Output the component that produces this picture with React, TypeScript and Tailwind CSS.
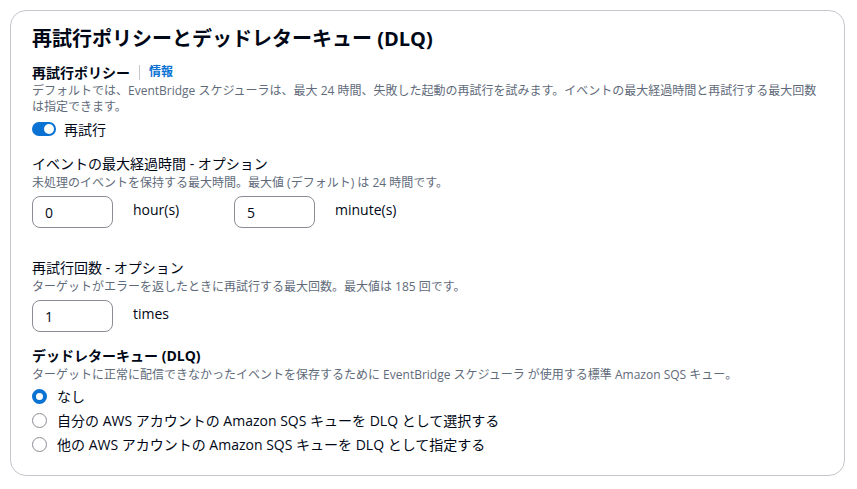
const font = { fontFamily: '"Open Sans", "Noto Sans CJK JP", sans-serif' };

function NumberInput({ value }: { value: string }) {
  return (
    <input
      type="text"
      defaultValue={value}
      className="w-[81px] h-[32px] rounded-lg border border-[#8c8c94] bg-white pl-[12px] text-[14px] text-[#000716] focus:outline-none"
    />
  );
}

function Radio({ checked, label }: { checked?: boolean; label: string }) {
  return (
    <label className="flex items-center gap-[10px] h-[24px] text-[14px] text-[#000716]">
      {checked ? (
        <span className="w-[15px] h-[15px] rounded-full border-[4.5px] border-[#0972d3] bg-white" />
      ) : (
        <span className="w-[15px] h-[15px] rounded-full border-[1.5px] border-[#8c8c94] bg-white" />
      )}
      <span>{label}</span>
    </label>
  );
}

export default function App() {
  return (
    <div className="min-h-screen bg-white p-[10px]" style={font}>
      <div className="w-[835px] rounded-2xl border border-[#c6c6cd] bg-white pl-[21px] pr-[20px] pt-[15px] pb-[19px] text-[#000716]">
        <h2 className="text-[20px] leading-[26px] font-bold mb-[10px]">
          再試行ポリシーとデッドレターキュー (DLQ)
        </h2>

        {/* Retry policy */}
        <div className="flex items-center h-[20px]">
          <span className="text-[14px] font-bold">再試行ポリシー</span>
          <span className="mx-[9px] h-[15px] w-px bg-[#c6c6cd]" />
          <a className="text-[12px] font-bold text-[#0972d3]">情報</a>
        </div>
        <p className="text-[12px] leading-[16px] text-[#5f6b7a] mt-px">
          <span className="block whitespace-nowrap">
            デフォルトでは、EventBridge スケジューラは、最大 24 時間、失敗した起動の再試行を試みます。イベントの最大経過時間と再試行する最大回数
          </span>
          <span className="block">は指定できます。</span>
        </p>
        <div className="flex items-center gap-[8px] h-[24px] mt-[2px]">
          <span className="relative w-[24px] h-[14px] rounded-full bg-[#0972d3]">
            <span className="absolute right-[2px] top-[2px] w-[10px] h-[10px] rounded-full bg-white" />
          </span>
          <span className="text-[14px]">再試行</span>
        </div>

        {/* Maximum age */}
        <div className="mt-[13px] text-[14px] leading-[20px]">イベントの最大経過時間 - オプション</div>
        <p className="text-[12px] leading-[16px] text-[#5f6b7a] mt-px">
          未処理のイベントを保持する最大時間。最大値 (デフォルト) は 24 時間です。
        </p>
        <div className="grid grid-cols-[202px_auto] mt-[5px]">
          <div className="flex items-start gap-[20px]">
            <NumberInput value="0" />
            <span className="text-[14px] leading-[20px] pt-[4px]">hour(s)</span>
          </div>
          <div className="flex items-start gap-[20px]">
            <NumberInput value="5" />
            <span className="text-[14px] leading-[20px] pt-[4px]">minute(s)</span>
          </div>
        </div>

        {/* Retry attempts */}
        <div className="mt-[30px] text-[14px] leading-[20px]">再試行回数 - オプション</div>
        <p className="text-[12px] leading-[16px] text-[#5f6b7a] mt-px">
          ターゲットがエラーを返したときに再試行する最大回数。最大値は 185 回です。
        </p>
        <div className="flex items-start gap-[20px] mt-[5px]">
          <NumberInput value="1" />
          <span className="text-[14px] leading-[20px] pt-[4px]">times</span>
        </div>

        {/* DLQ */}
        <div className="mt-[14px] text-[14px] leading-[20px] font-bold">デッドレターキュー (DLQ)</div>
        <p className="text-[12px] leading-[16px] text-[#5f6b7a] mt-px">
          ターゲットに正常に配信できなかったイベントを保存するために EventBridge スケジューラ が使用する標準 Amazon SQS キュー。
        </p>
        <div className="flex flex-col mt-px">
          <Radio checked label="なし" />
          <Radio label="自分の AWS アカウントの Amazon SQS キューを DLQ として選択する" />
          <Radio label="他の AWS アカウントの Amazon SQS キューを DLQ として指定する" />
        </div>
      </div>
    </div>
  );
}
